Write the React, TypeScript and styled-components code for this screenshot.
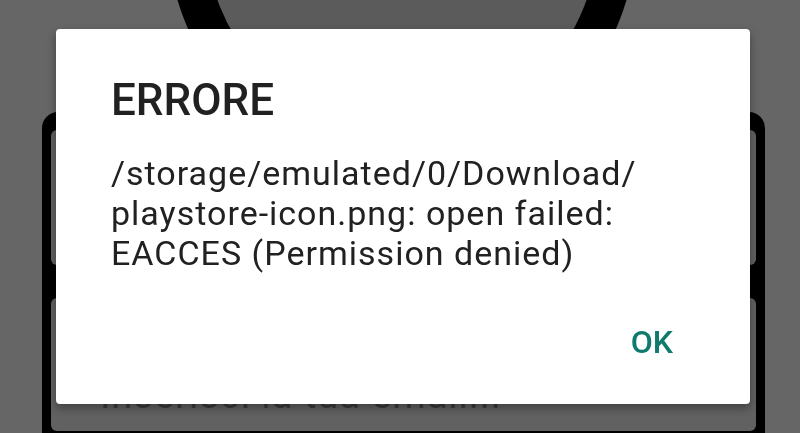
import React from 'react';
import styled, { createGlobalStyle } from 'styled-components';

const GlobalStyle = createGlobalStyle`
  html, body {
    margin: 0;
    padding: 0;
    width: 800px;
    height: 433px;
    overflow: hidden;
    background: #666666;
    font-family: Roboto, "Noto Sans", "Liberation Sans", sans-serif;
  }
`;

// Screen behind the dialog, already dimmed by the scrim
const Screen = styled.div`
  width: 800px;
  height: 433px;
  overflow: hidden;
  display: flex;
  flex-direction: column;
  align-items: center;
  background: #666666;
`;

const Avatar = styled.div`
  width: 468px;
  height: 468px;
  margin: -300px 0 -56px 4px;
  flex-shrink: 0;
  box-sizing: border-box;
  border-radius: 50%;
  border: 38px solid #000;
  background: #5b5b5b;
`;

const Panel = styled.div`
  width: 723px;
  margin-left: 7px;
  flex: 1;
  box-sizing: border-box;
  padding: 18px 9px 0;
  display: flex;
  flex-direction: column;
  gap: 33px;
  background: #000;
  border-radius: 16px 16px 0 0;
`;

const Field = styled.div<{ $h: number }>`
  height: ${p => p.$h}px;
  flex-shrink: 0;
  box-sizing: border-box;
  padding: 0 0 0 49px;
  display: flex;
  align-items: flex-end;
  background: #616161;
  border-radius: 6px;
`;

const Hint = styled.span`
  font-size: 38px;
  line-height: 44px;
  letter-spacing: 1px;
  margin-bottom: 14px;
  color: #3a3a3a;
  white-space: nowrap;
`;

// Alert dialog on top of everything
const Overlay = styled.div`
  position: fixed;
  inset: 0;
  display: flex;
  align-items: center;
  justify-content: center;
`;

const Dialog = styled.div`
  width: 694px;
  height: 375px;
  margin: 0 0 0 6px;
  box-sizing: border-box;
  padding: 45px 0 0 55px;
  display: flex;
  flex-direction: column;
  background: #fff;
  border-radius: 4px;
  box-shadow: 0 4px 10px rgba(0, 0, 0, 0.35);
`;

const Title = styled.h2`
  margin: 0;
  font-size: 44px;
  line-height: 52px;
  font-weight: 500;
  color: #212121;
`;

const Message = styled.p`
  margin: 27px 0 0;
  font-size: 34px;
  line-height: 40px;
  letter-spacing: 1px;
  font-weight: 400;
  color: #212121;
`;

const Actions = styled.div`
  margin-top: auto;
  margin-bottom: 34px;
  padding-right: 61px;
  display: flex;
  justify-content: flex-end;
`;

const TextButton = styled.button`
  border: none;
  background: none;
  padding: 8px 16px;
  font-family: inherit;
  font-size: 32px;
  line-height: 40px;
  font-weight: 500;
  color: #0f7a6d;
  cursor: pointer;
`;

export default function App() {
  return (
    <>
      <GlobalStyle />
      <Screen>
        <Avatar />
        <Panel>
          <Field $h={135} />
          <Field $h={133}>
            <Hint>Inserisci la tua email...</Hint>
          </Field>
        </Panel>
      </Screen>
      <Overlay>
        <Dialog>
          <Title>ERRORE</Title>
          <Message>
            /storage/emulated/0/Download/
            <br />
            playstore-icon.png: open failed:
            <br />
            EACCES (Permission denied)
          </Message>
          <Actions>
            <TextButton>OK</TextButton>
          </Actions>
        </Dialog>
      </Overlay>
    </>
  );
}
